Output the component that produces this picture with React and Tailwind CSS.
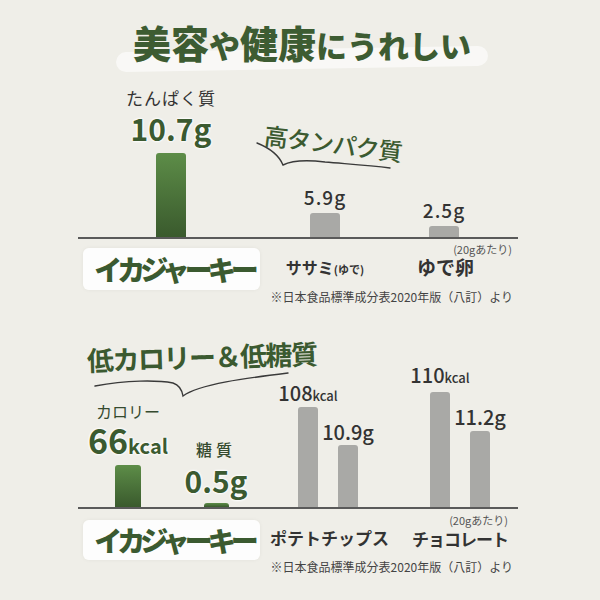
import React from "react";

const halo = "[text-shadow:0_0_3px_#fff,0_0_3px_#fff,0_0_2px_#fff,0_0_1px_#fff]";

function GreenBar({ h, w }) {
  return <div className={`${h} ${w} rounded-t-[3px] bg-linear-to-b from-[#5d8d48] to-[#3a5a2d]`} />;
}

function GreyBar({ h, w }) {
  return <div className={`${h} ${w} rounded-t-[3px] bg-[#a9a9a6]`} />;
}

function JerkyTag({ className }) {
  return (
    <div className={`${className} flex w-[177px] items-center justify-center rounded-[6px] bg-white/90 pl-[5px] shadow-[0_0_4px_rgba(0,0,0,0.05)]`}>
      <span className="whitespace-nowrap text-[28px] font-black tracking-[-5px] text-[#3b5a30]">イカジャーキー</span>
    </div>
  );
}

function Source() {
  return (
    <p className="-mt-[1px] pr-[5px] text-right text-[12px] leading-[16px] text-[#444]">
      ※日本食品標準成分表2020年版（八訂）より
    </p>
  );
}

// number + small unit, kept on a fixed-height line so the mixed sizes don't grow it
function Kcal({ num, big, small, h, className }) {
  return (
    <span className={`flex items-baseline whitespace-nowrap ${h} ${className}`}>
      <span className={`${big} leading-none`}>{num}</span>
      <span className={`${small} leading-none`}>kcal</span>
    </span>
  );
}

function Title() {
  return (
    <div className="relative flex justify-center pl-[4px] pt-[22px]">
      <span className="absolute left-[116px] top-[49px] h-[20px] w-[372px] -rotate-1 rounded-full bg-white/60" />
      <h1 className="relative h-[40px] whitespace-nowrap font-black leading-[40px] text-[#3d5c32]">
        <span className="text-[38px]">美容</span>
        <span className="text-[31px]">や</span>
        <span className="text-[38px]">健康</span>
        <span className="text-[31px]">にうれしい</span>
      </h1>
    </div>
  );
}

function ProteinChart() {
  return (
    <div className="ml-[78px] mt-[27px] w-[440px]">
      <div className="flex items-end border-b-2 border-[#5a5a5a]">
        <div className="ml-[33px] flex w-[120px] flex-col items-center">
          <span className="text-[17px] leading-[17px] tracking-[1px] text-[#333]">たんぱく質</span>
          <span className={`mt-[7px] text-[30px] font-bold leading-[30px] text-[#3b5a30] ${halo}`}>10.7g</span>
          <div className="mt-[10px]">
            <GreenBar h="h-[84px]" w="w-[30px]" />
          </div>
        </div>

        <div className="ml-[34px] flex w-[120px] flex-col items-center">
          <div className="relative -ml-[2px] h-[48px] w-[140px] self-start">
            <span className="mt-[7px] block rotate-[7deg] whitespace-nowrap text-center text-[24px] font-medium leading-[28px] tracking-[-1px] text-[#3b5a30]">
              高タンパク質
            </span>
            <svg className="absolute left-0 top-0 overflow-visible" width="140" height="48" viewBox="0 0 140 48">
              <path
                d="M-6 21 C4 25, 15 31, 20 43 C30 38, 45 38, 62 40 C85 42, 105 43, 127 46"
                fill="none"
                stroke="#3a3a3a"
                strokeWidth="1.4"
                strokeLinecap="round"
              />
            </svg>
          </div>
          <span className="mt-[17px] text-[19px] font-medium leading-[19px] tracking-[1px] text-[#333]">5.9g</span>
          <div className="mt-[7px]">
            <GreyBar h="h-[24px]" w="w-[30px]" />
          </div>
        </div>

        <div className="ml-[9px] flex w-[100px] flex-col items-center">
          <span className="text-[19px] font-medium leading-[19px] tracking-[1px] text-[#333]">2.5g</span>
          <div className="mt-[7px]">
            <GreyBar h="h-[11px]" w="w-[30px]" />
          </div>
        </div>
      </div>

      <div className="flex items-start">
        <JerkyTag className="ml-[5px] mt-[9px] h-[42px]" />
        <div className="ml-[5px] mt-[20px] w-[120px] text-center text-[16px] font-bold leading-[17px] text-[#333]">
          ササミ<span className="text-[11px]">(ゆで)</span>
        </div>
        <div className="ml-[9px] mt-[4px] flex w-[124px] flex-col">
          <span className="self-end pr-[6px] text-[11px] leading-[12px] text-[#555]">(20gあたり)</span>
          <span className="mt-[2px] pl-[23px] text-[19px] font-bold leading-[19px] text-[#333]">ゆで卵</span>
        </div>
      </div>
      <Source />
    </div>
  );
}

function CalorieChart() {
  return (
    <div className="ml-[78px] mt-[40px] w-[440px]">
      <div className="flex items-end border-b-2 border-[#5a5a5a]">
        <div className="flex w-[210px] flex-col">
          <div className="ml-[9px] h-[30px] origin-left -rotate-[1.7deg] whitespace-nowrap text-[27px] font-bold leading-[30px] tracking-[-1.5px] text-[#3b5a30]">
            低カロリー＆低糖質
          </div>
          <svg className="-mt-[3px] ml-[9px] overflow-visible" width="210" height="24" viewBox="0 0 210 24">
            <path
              d="M8 14 C40 8, 70 8, 86 11 C92 13, 95 18, 96 24 C112 12, 160 6, 201 1"
              fill="none"
              stroke="#3a3a3a"
              strokeWidth="1.4"
              strokeLinecap="round"
            />
          </svg>
          <div className="mt-[8px] flex items-end">
            <div className="ml-[30px] flex w-[40px] flex-col items-center">
              <span className="whitespace-nowrap text-[16px] leading-[15px] text-[#354a2f]">カロリー</span>
              <Kcal
                num="66"
                big="text-[34px]"
                small="text-[20px]"
                h="h-[34px]"
                className={`mt-[4px] font-bold text-[#3b5a30] ${halo}`}
              />
              <div className="mt-[8px]">
                <GreenBar h="h-[42px]" w="w-[26px]" />
              </div>
            </div>
            <div className="ml-[48px] flex w-[40px] flex-col items-center">
              <span className="whitespace-nowrap text-[16px] font-medium leading-[15px] tracking-[4px] text-[#354a2f]">糖質</span>
              <span className={`mt-[8px] text-[30px] font-bold leading-[30px] text-[#3b5a30] ${halo}`}>0.5g</span>
              <div className="mt-[8px]">
                <GreenBar h="h-[4px]" w="w-[25px]" />
              </div>
            </div>
          </div>
        </div>

        <div className="flex w-[40px] flex-col items-center">
          <Kcal num="108" big="text-[20px]" small="text-[13px]" h="h-[20px]" className="font-medium text-[#333]" />
          <div className="mt-[4px]">
            <GreyBar h="h-[100px]" w="w-[20px]" />
          </div>
        </div>
        <div className="flex w-[40px] flex-col items-center">
          <span className="whitespace-nowrap text-[20px] font-medium leading-[20px] text-[#333]">10.9g</span>
          <div className="mt-[3px]">
            <GreyBar h="h-[62px]" w="w-[20px]" />
          </div>
        </div>
        <div className="ml-[52px] flex w-[40px] flex-col items-center">
          <Kcal num="110" big="text-[20px]" small="text-[13px]" h="h-[20px]" className="font-medium text-[#333]" />
          <div className="mt-[7px]">
            <GreyBar h="h-[115px]" w="w-[20px]" />
          </div>
        </div>
        <div className="flex w-[40px] flex-col items-center">
          <span className="whitespace-nowrap text-[20px] font-medium leading-[20px] text-[#333]">11.2g</span>
          <div className="mt-[4px]">
            <GreyBar h="h-[76px]" w="w-[20px]" />
          </div>
        </div>
      </div>

      <div className="flex items-start">
        <JerkyTag className="ml-[5px] mt-[11px] h-[40px]" />
        <span className="ml-[10px] mt-[20px] whitespace-nowrap text-[17px] font-bold leading-[17px] text-[#333]">ポテトチップス</span>
        <div className="ml-[23px] mt-[6px] flex flex-col">
          <span className="self-end text-[11px] leading-[11px] text-[#555]">(20gあたり)</span>
          <span className="mt-[4px] whitespace-nowrap text-[17px] font-bold leading-[17px] tracking-[-1px] text-[#333]">チョコレート</span>
        </div>
      </div>
      <Source />
    </div>
  );
}

export default function App() {
  return (
    <div className="h-[600px] w-[600px] overflow-hidden bg-[#efeee8] font-['Noto_Sans_CJK_JP',sans-serif] text-[#333]">
      <Title />
      <ProteinChart />
      <CalorieChart />
    </div>
  );
}
